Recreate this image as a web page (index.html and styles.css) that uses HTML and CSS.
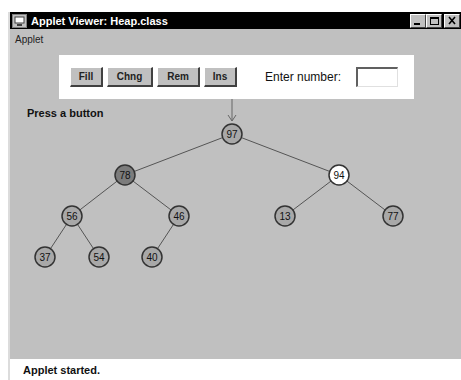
FILE: index.html
```html
<!DOCTYPE html>
<html lang="en">
<head>
    <meta charset="UTF-8">
    <title>Applet Viewer: Heap.class</title>
    <link rel="stylesheet" href="styles.css">
</head>
<body>

    <div class="window">
        <div class="titlebar">
            <svg class="appicon" width="15" height="14" viewBox="0 0 15 14">
                <rect x="0.5" y="0.5" width="14" height="13" fill="#c0c0c0" stroke="#808080"/>
                <rect x="3" y="3" width="9" height="6" fill="#fff" stroke="#404040"/>
                <rect x="5" y="10" width="5" height="2" fill="#404040"/>
            </svg>
            <span class="title">Applet Viewer: Heap.class</span>
            <div class="controls">
                <span class="ctl"><svg width="14" height="12" viewBox="0 0 14 12"><rect x="3" y="8" width="6" height="2" fill="#000"/></svg></span>
                <span class="ctl"><svg width="14" height="12" viewBox="0 0 14 12"><rect x="3.5" y="2.5" width="8" height="7" fill="none" stroke="#000"/><rect x="3" y="2" width="9" height="2" fill="#000"/></svg></span>
                <span class="ctl gap"><svg width="14" height="12" viewBox="0 0 14 12"><path d="M4 2 L10 9 M10 2 L4 9" stroke="#000" stroke-width="1.6"/></svg></span>
            </div>
        </div>

        <div class="menubar">Applet</div>

        <div class="toolbar">
            <button class="btn w-fill">Fill</button>
            <button class="btn w-chng">Chng</button>
            <button class="btn w-rem">Rem</button>
            <button class="btn w-ins">Ins</button>
            <label class="prompt" for="num">Enter number:</label>
            <input class="numbox" type="text" id="num">
        </div>

        <div class="canvas">
            <div class="message">Press a button</div>
            <svg width="451" height="260" viewBox="10 99 451 260">
                <g stroke="#555" stroke-width="1">
                    <line x1="232" y1="134" x2="125" y2="175"/>
                    <line x1="232" y1="134" x2="339" y2="175"/>
                    <line x1="125" y1="175" x2="72" y2="216"/>
                    <line x1="125" y1="175" x2="179" y2="216"/>
                    <line x1="339" y1="175" x2="285" y2="216"/>
                    <line x1="339" y1="175" x2="393" y2="216"/>
                    <line x1="72" y1="216" x2="45" y2="257"/>
                    <line x1="72" y1="216" x2="99" y2="257"/>
                    <line x1="179" y1="216" x2="152" y2="257"/>
                </g>
                <g stroke="#666" stroke-width="1" fill="none">
                    <line x1="232" y1="99" x2="232" y2="121"/>
                    <path d="M228 115 L232 121 L236 115"/>
                </g>
                <g class="node"><circle cx="232" cy="134" r="10"/><text x="232" y="137.5">97</text></g>
                <g class="node dark"><circle cx="125" cy="175" r="10"/><text x="125" y="178.5">78</text></g>
                <g class="node light"><circle cx="339" cy="175" r="10"/><text x="339" y="178.5">94</text></g>
                <g class="node"><circle cx="72" cy="216" r="10"/><text x="72" y="219.5">56</text></g>
                <g class="node"><circle cx="179" cy="216" r="10"/><text x="179" y="219.5">46</text></g>
                <g class="node"><circle cx="285" cy="216" r="10"/><text x="285" y="219.5">13</text></g>
                <g class="node"><circle cx="393" cy="216" r="10"/><text x="393" y="219.5">77</text></g>
                <g class="node"><circle cx="45" cy="257" r="10"/><text x="45" y="260.5">37</text></g>
                <g class="node"><circle cx="99" cy="257" r="10"/><text x="99" y="260.5">54</text></g>
                <g class="node"><circle cx="152" cy="257" r="10"/><text x="152" y="260.5">40</text></g>
            </svg>
        </div>

        <div class="status">Applet started.</div>
    </div>

</body>
</html>
```

FILE: styles.css
```css
body {
    margin: 0;
    padding: 12px 0 0 8px;
    background-color: white;
    font-family: "Liberation Sans", Arial, sans-serif;
}

.window {
    border-left: 2px solid #dcdcdc;
    background-color: #c0c0c0;
}

.titlebar {
    height: 17px;
    background-color: #000;
    display: flex;
    align-items: center;
    padding-left: 2px;
}

.appicon {
    margin-right: 4px;
}

.title {
    color: white;
    font-size: 11px;
    font-weight: bold;
}

.controls {
    margin-left: auto;
    display: flex;
    padding-right: 1px;
}

.ctl {
    width: 14px;
    height: 12px;
    background-color: #c0c0c0;
    border-top: 1px solid #fff;
    border-left: 1px solid #fff;
    border-right: 1px solid #404040;
    border-bottom: 1px solid #404040;
    display: flex;
}

.ctl.gap {
    margin-left: 2px;
}

.menubar {
    height: 20px;
    line-height: 22px;
    padding-left: 5px;
    font-size: 10px;
    color: #222;
}

.toolbar {
    margin: 6px 0 0 49px;
    width: 344px;
    height: 44px;
    padding-left: 11px;
    background-color: white;
    display: flex;
    align-items: center;
}

.btn {
    height: 20px;
    margin-right: 4px;
    padding: 0;
    font-family: "Liberation Sans", Arial, sans-serif;
    font-size: 10px;
    font-weight: bold;
    color: #222;
    background-color: #c0c0c0;
    border-top: 1px solid #fff;
    border-left: 1px solid #fff;
    border-right: 2px solid #404040;
    border-bottom: 2px solid #404040;
}

.w-fill { width: 33px; }
.w-chng { width: 46px; }
.w-rem { width: 43px; }
.w-ins { width: 33px; }

.prompt {
    margin-left: 24px;
    font-size: 12px;
    color: #111;
}

.numbox {
    margin-left: 15px;
    width: 39px;
    height: 17px;
    padding: 0;
    border-top: 2px solid #606060;
    border-left: 2px solid #606060;
    border-right: 1px solid #e0e0e0;
    border-bottom: 1px solid #e0e0e0;
}

.canvas {
    position: relative;
    height: 260px;
}

.canvas svg {
    display: block;
}

.message {
    position: absolute;
    left: 17px;
    top: 8px;
    font-size: 11px;
    font-weight: bold;
    color: #111;
}

.node circle {
    fill: #a8a8a8;
    stroke: #333;
    stroke-width: 1.5;
}

.node.dark circle {
    fill: #7c7c7c;
}

.node.light circle {
    fill: #fff;
}

.node text {
    font-family: "Liberation Sans", Arial, sans-serif;
    font-size: 10px;
    text-anchor: middle;
    fill: #111;
}

.status {
    height: 21px;
    line-height: 22px;
    padding-left: 13px;
    background-color: white;
    font-size: 11px;
    font-weight: bold;
    color: #111;
}
```
